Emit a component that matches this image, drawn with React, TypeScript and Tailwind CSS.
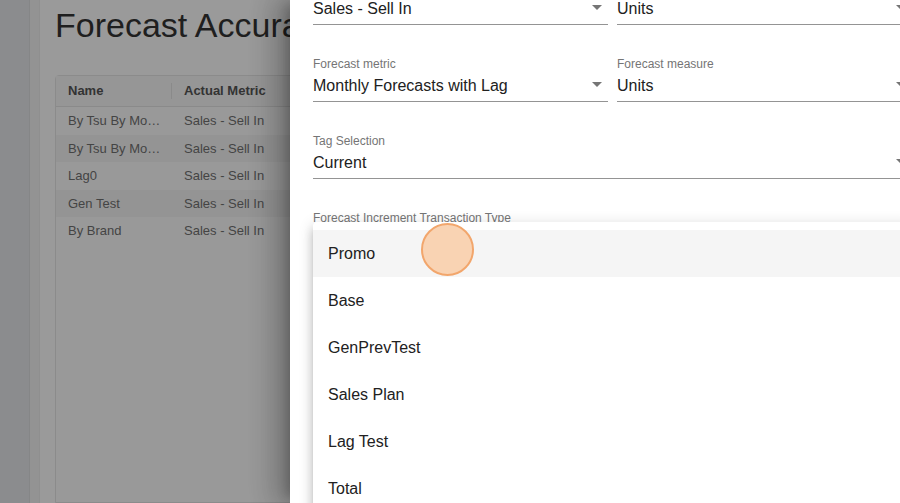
import React from 'react';

type Row = { name: string; metric: string };

const rows: Row[] = [
  { name: 'By Tsu By Mo…', metric: 'Sales - Sell In' },
  { name: 'By Tsu By Mo…', metric: 'Sales - Sell In' },
  { name: 'Lag0', metric: 'Sales - Sell In' },
  { name: 'Gen Test', metric: 'Sales - Sell In' },
  { name: 'By Brand', metric: 'Sales - Sell In' },
];

const options = ['Promo', 'Base', 'GenPrevTest', 'Sales Plan', 'Lag Test', 'Total'];

function Arrow() {
  return (
    <svg width="24" height="24" viewBox="0 0 24 24" className="shrink-0 -mr-[1px] -mt-[4px] fill-[#757575]">
      <path d="M7 10l5 5 5-5z" />
    </svg>
  );
}

function Field({ label, value, arrow = true }: { label?: string; value: string; arrow?: boolean }) {
  return (
    <div className="flex flex-col">
      <div className="h-[14px] text-[12px] leading-[14px] text-[#757575] whitespace-nowrap">{label}</div>
      <div className="mt-[4px] flex h-[27px] items-start justify-between border-b border-[#949494] pt-[1px]">
        <span className="text-[16px] leading-[19px] text-[#212121] whitespace-nowrap">{value}</span>
        {arrow && <Arrow />}
      </div>
    </div>
  );
}

export default function App() {
  return (
    <div className="relative flex h-[503px] w-[900px] overflow-hidden font-['Liberation_Sans',Arial,sans-serif]">
      {/* page behind the backdrop */}
      <div className="flex w-[290px] shrink-0 overflow-hidden bg-[#9a9a9a]">
        <div className="w-[30px] shrink-0 border-r border-[#858687] bg-[#8b8c8e]" />
        <div className="w-[10px] shrink-0 border-r border-[#8f8f8f] bg-[#939393]" />
        <div className="flex min-w-0 flex-1 flex-col pl-[15px]">
          <h1 className="mt-[8px] h-[34px] whitespace-nowrap text-[34px] leading-[34px] text-[#1f1f1f]">
            Forecast Accuracy
          </h1>
          <div className="mt-[33px] w-[600px] flex-1 rounded-t-[4px] border border-[#8b8b8b] bg-[#999999]">
            <div className="flex h-[31px] items-center border-b border-[#8a8a8a] bg-[#969696] text-[13px] font-bold text-[#333333]">
              <div className="flex w-[116px] items-center justify-between pl-[12px]">
                <span>Name</span>
                <span className="h-[16px] w-px bg-[#8a8a8a]" />
              </div>
              <div className="pl-[12px]">Actual Metric</div>
            </div>
            {rows.map((r, i) => (
              <div
                key={i}
                className={`flex h-[27.6px] items-center text-[13px] text-[#444444] ${i % 2 === 1 ? 'bg-[#949494]' : 'bg-[#999999]'}`}
              >
                <div className="w-[116px] pl-[12px] whitespace-nowrap">{r.name}</div>
                <div className="pl-[12px] whitespace-nowrap">{r.metric}</div>
              </div>
            ))}
          </div>
        </div>
      </div>

      {/* drawer */}
      <div className="relative z-10 w-[645px] shrink-0 bg-white px-[23px] shadow-[-8px_0_10px_-5px_rgba(0,0,0,0.2),-16px_0_24px_2px_rgba(0,0,0,0.14),-6px_0_30px_5px_rgba(0,0,0,0.12)]">
        <div className="-mt-[20px] flex flex-col gap-[32px]">
          <div className="grid grid-cols-2 gap-[9px]">
            <Field value="Sales - Sell In" />
            <Field value="Units" />
          </div>
          <div className="grid grid-cols-2 gap-[9px]">
            <Field label="Forecast metric" value="Monthly Forecasts with Lag" />
            <Field label="Forecast measure" value="Units" />
          </div>
          <Field label="Tag Selection" value="Current" />
          <Field label="Forecast Increment Transaction Type" value="" arrow={false} />
        </div>

        {/* open select menu */}
        <div className="absolute left-[23px] top-[222px] w-[599px] rounded-[4px] bg-white py-[8px] shadow-[0_5px_5px_-3px_rgba(0,0,0,0.2),0_8px_10px_1px_rgba(0,0,0,0.14),0_3px_14px_2px_rgba(0,0,0,0.12)]">
          {options.map((o, i) => (
            <div
              key={o}
              className={`flex h-[47px] items-center px-[15px] text-[16px] text-[#212121] ${i === 0 ? 'bg-[#f5f5f5]' : ''}`}
            >
              {o}
            </div>
          ))}
        </div>

        {/* click indicator */}
        <div className="absolute left-[131px] top-[223px] h-[53px] w-[53px] rounded-full border-2 border-[#f2a66c] bg-[#f9d3b3]" />
      </div>
    </div>
  );
}
